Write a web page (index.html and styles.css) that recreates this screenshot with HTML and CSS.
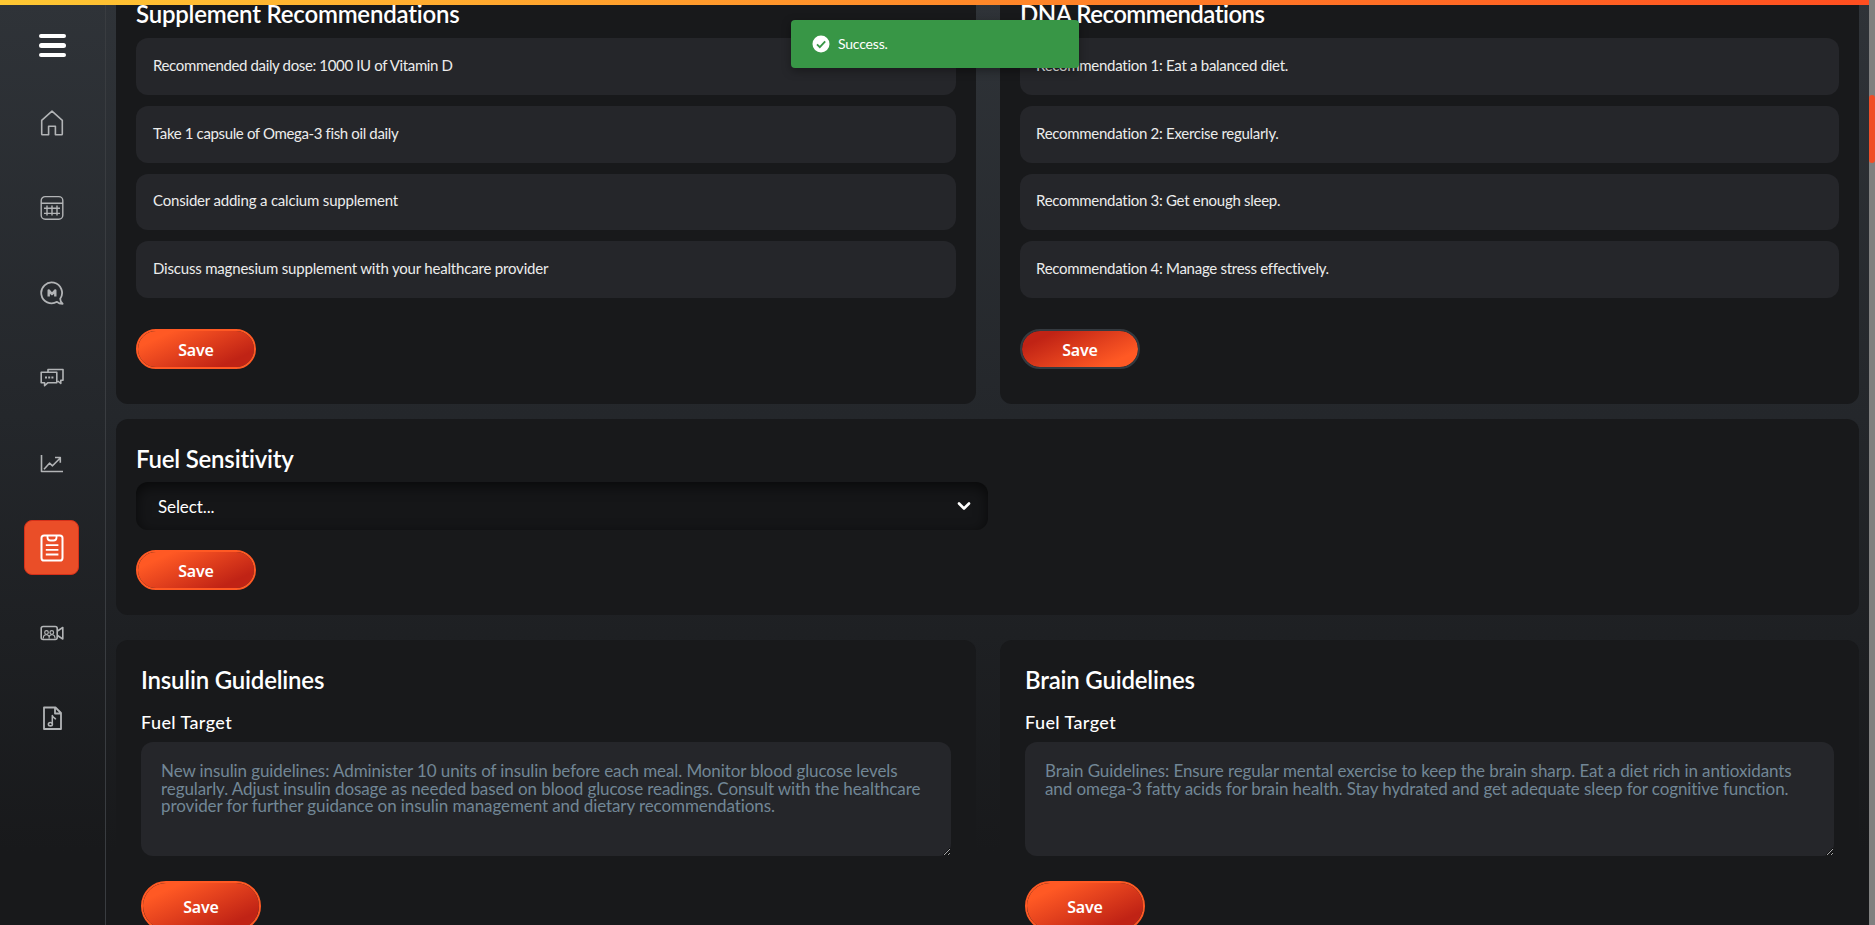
FILE: index.html
```html
<!DOCTYPE html>
<html lang="en">
<head>
<meta charset="utf-8">
<title>Guidelines</title>
<link rel="stylesheet" href="styles.css">
</head>
<body>
<div class="progress"></div>
<div class="app">
  <nav class="sidebar">
    <button class="menu" aria-label="Menu"><i></i><i></i><i></i></button>
    <a class="nav"><svg width="24" height="26" viewBox="0 0 24 26"><path d="M1.700 10.300 12 1.200l10.300 9.100V24q0 .7-.7.7h-6.200v-8.500H8.600v8.500H2.400q-.7 0-.7-.7z"/></svg></a>
    <a class="nav"><svg width="24" height="26" viewBox="0 0 24 26"><g stroke-width="1.400"><rect x="1.200" y="1.600" width="21.600" height="22.600" rx="4"/><path d="M1 8.300h22M4 13.200h16M4 18.400h16M7 10.600v10M12 10.600v10M17 10.600v10"/></g></svg></a>
    <a class="nav"><svg width="24" height="26" viewBox="0 0 24 26"><path stroke-width="1.800" d="M20.200 18.800A10.400 10.400 0 1 0 17 21.800c1.500 1.500 3.200 2 5.600 2-1.800-1.500-2.400-2.800-2.400-5z"/><path stroke-width="2.400" d="M8.700 16.400V10.400l3.300 3.700 3.300-3.700v6"/></svg></a>
    <a class="nav"><svg width="24" height="24" viewBox="0 0 24 24"><path d="M1.200 6.200h15.600v10.500H8l-3.400 3v-3H1.200zM8 6V3.500h15v10.800h-2.200v3.200l-3-2.500"/><path stroke-width="2" d="M5 11.500h2M8.200 11.500h2M11.400 11.500h2"/></svg></a>
    <a class="nav"><svg width="24" height="24" viewBox="0 0 24 24"><path d="M1.500 4v16.500H23M4 18.200l5.500-6 3 2.600 7.500-7.600M15 6.500h5.300v5.200"/></svg></a>
    <a class="nav active"><svg width="24" height="28" viewBox="0 0 24 28"><rect x="1.500" y="1.500" width="21" height="25" rx="2.600" stroke-width="2"/><path stroke-width="1.800" d="M7.500 2v1.500q0 3 3 3h3q3 0 3-3V2M5.800 11.200h12.600M5.800 15.900h12.600M5.800 20.500h12.600"/></svg></a>
    <a class="nav"><svg width="24" height="24" viewBox="0 0 24 24"><rect x="1.200" y="5.500" width="16" height="13" rx="2"/><path d="m17.500 10 5.300-3.500v11.500L17.500 14.500"/><g stroke-width="1.200"><circle cx="6.500" cy="11.500" r="1.800"/><circle cx="11.800" cy="11.500" r="1.800"/><path d="M3.300 17.500c0-5 6-5 6 0M9 17.500c0-5 6-5 6 0"/></g></svg></a>
    <a class="nav"><svg width="24" height="26" viewBox="0 0 24 26"><path stroke-width="1.800" d="M4 2.500h11.500L21 8v16H4zM15 3v5.500h5.500"/><path stroke-width="1.500" d="M12.300 19v-8.500c.5 2 2.500 2.300 3.500 3.800"/><ellipse cx="10.400" cy="19.200" rx="2" ry="1.700"/></svg></a>
  </nav>
  <main class="content">
    <div class="row recs">
      <section class="card">
        <h2>Supplement Recommendations</h2>
        <ul class="list">
          <li class="tight"><span>Recommended daily dose: 1000 IU of Vitamin D</span></li>
          <li class="tight"><span>Take 1 capsule of Omega-3 fish oil daily</span></li>
          <li><span>Consider adding a calcium supplement</span></li>
          <li><span>Discuss magnesium supplement with your healthcare provider</span></li>
        </ul>
        <button class="save">Save</button>
      </section>
      <section class="card dna">
        <h2>DNA Recommendations</h2>
        <ul class="list">
          <li><span>Recommendation 1: Eat a balanced diet.</span></li>
          <li><span>Recommendation 2: Exercise regularly.</span></li>
          <li><span>Recommendation 3: Get enough sleep.</span></li>
          <li><span>Recommendation 4: Manage stress effectively.</span></li>
        </ul>
        <button class="save focused">Save</button>
      </section>
    </div>
    <section class="card fuel">
      <h2>Fuel Sensitivity</h2>
      <div class="select"><span>Select...</span><svg width="16" height="16" viewBox="0 0 16 16"><path d="m3 5.500 5 5 5-5"/></svg></div>
      <button class="save">Save</button>
    </section>
    <div class="row guides">
      <section class="card guide">
        <h2>Insulin Guidelines</h2>
        <label>Fuel Target</label>
        <textarea placeholder="New insulin guidelines: Administer 10 units of insulin before each meal. Monitor blood glucose levels regularly. Adjust insulin dosage as needed based on blood glucose readings. Consult with the healthcare provider for further guidance on insulin management and dietary recommendations."></textarea>
        <button class="save tall">Save</button>
      </section>
      <section class="card guide">
        <h2>Brain Guidelines</h2>
        <label>Fuel Target</label>
        <textarea placeholder="Brain Guidelines: Ensure regular mental exercise to keep the brain sharp. Eat a diet rich in antioxidants and omega-3 fatty acids for brain health. Stay hydrated and get adequate sleep for cognitive function."></textarea>
        <button class="save tall">Save</button>
      </section>
    </div>
  </main>
  <div class="scrollbar"><div class="thumb"></div></div>
</div>
<div class="toast"><svg width="18" height="18" viewBox="0 0 18 18"><circle cx="9" cy="9" r="8.500" fill="#fff"/><path d="m5 9.300 2.800 2.800 5.400-5.700" fill="none" stroke="#389646" stroke-width="1.800"/></svg><span>Success.</span></div>
</body>
</html>
```
FILE: styles.css
```css
* { box-sizing: border-box; }
body {
  margin: 0;
  height: 925px;
  overflow: hidden;
  background: linear-gradient(180deg, #2f3338 0%, #24272b 45%, #18191b 92%);
  color: #fff;
  font-family: Lato, "Noto Sans", sans-serif;
}
h2, ul { margin: 0; padding: 0; }
button { font: inherit; color: inherit; }
.progress {
  position: absolute;
  top: 0;
  left: 0;
  width: 1869px;
  height: 5px;
  z-index: 2;
  background: linear-gradient(90deg, #ffc833, #ff4e20);
}
.app { display: flex; height: 925px; }

.sidebar {
  width: 106px;
  flex: none;
  display: flex;
  flex-direction: column;
  align-items: center;
  padding: 34px 2px 0 0;
  border-right: 1px solid #393c40;
}
.menu {
  display: flex;
  flex-direction: column;
  gap: 5px;
  padding: 0;
  margin: 0 0 38.600px 2px;
  border: 0;
  background: none;
}
.menu i { width: 27px; height: 4.300px; border-radius: 3px; background: #fff; }
.nav {
  width: 55px;
  height: 55px;
  margin-bottom: 30px;
  border-radius: 8px;
  display: flex;
  align-items: center;
  justify-content: center;
}
.nav svg { fill: none; stroke: #b2b4b6; stroke-width: 1.6; stroke-linejoin: round; }
.nav.active { background: #ea4e28; border: 1px solid #d53019; }
.nav.active svg { stroke: #fff; }

.content { flex: 1; padding-left: 10px; padding-right: 10px; }
.row { display: grid; grid-template-columns: 860px 859px; gap: 24px; }
.card { background: #18191b; border-radius: 12px; padding: 0 20px; }
.card h2 {
  font-size: 24px;
  line-height: 32px;
  font-weight: 600;
  letter-spacing: -.2px;
  white-space: nowrap;
}

.recs .card { height: 404px; border-radius: 0 0 12px 12px; }
.recs h2 { margin-top: -2px; }
.recs .dna h2 { letter-spacing: -.52px; }
.list { list-style: none; display: grid; gap: 11px; margin-top: 8px; }
.list li {
  height: 56.75px;
  display: flex;
  align-items: center;
  padding: 0 17px 3px;
  border-radius: 12px;
  background: #25262a;
  color: #ececec;
  font-size: 15px;
  letter-spacing: -.19px;
}
.list .tight { letter-spacing: -.36px; }
.dna .list li { padding-left: 16px; letter-spacing: -.28px; }
.save {
  display: block;
  width: 120px;
  height: 40px;
  padding: 1px 0 0;
  border: 2px solid #ff5924;
  border-radius: 25px;
  background: linear-gradient(155deg, #ff5924 18%, #c02315 82%) padding-box;
  font-family: "Noto Sans", sans-serif;
  font-size: 16px;
  font-weight: 600;
  letter-spacing: -.2px;
}
.recs .save { margin-top: 31px; }
.save.focused {
  border-color: #343a40;
  background: linear-gradient(155deg, #c02315 18%, #ff5924 82%) padding-box;
}

.fuel { height: 196px; margin-top: 15px; padding-top: 24px; }
.select {
  width: 852px;
  height: 48px;
  margin: 7px 0 20px;
  padding: 0 16px 0 22px;
  display: flex;
  align-items: center;
  justify-content: space-between;
  border-radius: 12px;
  background: #151618;
  box-shadow: inset 0 4px 14px rgba(0, 0, 0, .6);
  font-size: 17px;
  letter-spacing: -.1px;
}
.select svg { fill: none; stroke: #fff; stroke-width: 2.6; stroke-linecap: round; stroke-linejoin: round; }

.guides { margin-top: 25px; }
.guide { height: 320px; padding: 24px 25px 0; }
.guide label {
  display: block;
  margin-top: 15px;
  font-size: 18px;
  line-height: 22px;
  font-weight: 500;
  letter-spacing: .4px;
}
.guide textarea {
  display: block;
  width: 100%;
  height: 114px;
  margin: 9px 0 25px;
  padding: 20px;
  border: 0;
  border-radius: 12px;
  background: #25262a;
  color: #fff;
  font: 17px/17.5px Lato, "Noto Sans", sans-serif;
  letter-spacing: -.09px;
}
.guide textarea::placeholder { color: #728796; }
.save.tall { height: 50px; }

.scrollbar { width: 6px; flex: none; background: #808080; padding-top: 95px; }
.thumb { height: 68px; border-radius: 3px; background: #f04e27; }

.toast {
  position: absolute;
  left: 791px;
  top: 20px;
  width: 288px;
  height: 48px;
  z-index: 3;
  display: flex;
  align-items: center;
  gap: 8px;
  padding: 0 0 1px 21px;
  border-radius: 4px;
  background: #389646;
  box-shadow: 0 3px 10px rgba(0, 0, 0, .35);
  font-size: 14px;
  letter-spacing: -.2px;
}
```
